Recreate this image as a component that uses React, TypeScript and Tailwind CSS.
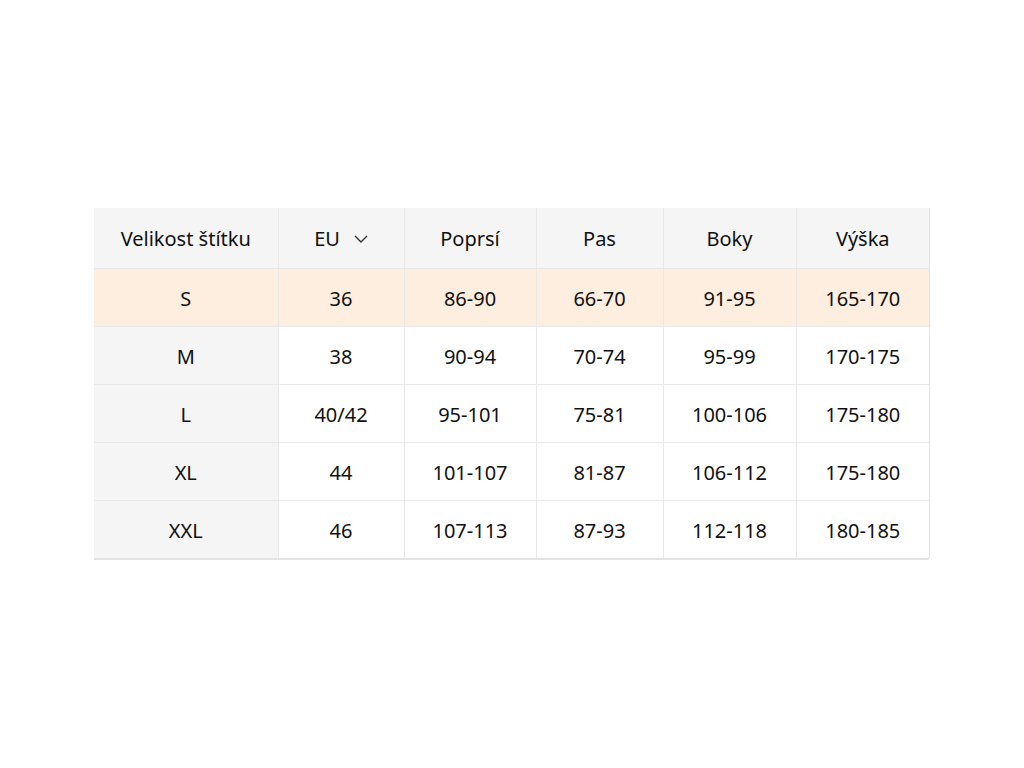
import React from 'react';

const rows = [
  { label: 'S', eu: '36', bust: '86-90', waist: '66-70', hips: '91-95', height: '165-170', active: true },
  { label: 'M', eu: '38', bust: '90-94', waist: '70-74', hips: '95-99', height: '170-175' },
  { label: 'L', eu: '40/42', bust: '95-101', waist: '75-81', hips: '100-106', height: '175-180' },
  { label: 'XL', eu: '44', bust: '101-107', waist: '81-87', hips: '106-112', height: '175-180' },
  { label: 'XXL', eu: '46', bust: '107-113', waist: '87-93', hips: '112-118', height: '180-185' },
];

const widths = ['w-[184px]', 'w-[126px]', 'w-[132px]', 'w-[127px]', 'w-[133px]', 'w-[133px]'];

export default function App() {
  return (
    <div className="min-h-screen bg-white pt-[208px] pl-[94px] font-['Noto_Sans','Open_Sans',sans-serif] text-[20px] text-[#111]">
      <div className="w-[836px] overflow-hidden rounded-br-[4px] border-r border-b-2 border-[#e3e3e3]">
        <table className="w-full table-fixed border-collapse">
          <thead>
            <tr className="h-[60px] bg-[#f5f5f5]">
              <th className={`${widths[0]} pt-[3px] font-normal border-r border-[#e8e8e8]`}>Velikost štítku</th>
              <th className={`${widths[1]} pt-[3px] font-normal border-r border-[#e8e8e8]`}>
                <span className="inline-flex items-center gap-[14px]">
                  EU
                  <svg width="14" height="8" viewBox="0 0 14 8" fill="none" stroke="#333" strokeWidth="1.4">
                    <path d="M1 1l6 6 6-6" />
                  </svg>
                </span>
              </th>
              <th className={`${widths[2]} pt-[3px] font-normal border-r border-[#e8e8e8]`}>Poprsí</th>
              <th className={`${widths[3]} pt-[3px] font-normal border-r border-[#e8e8e8]`}>Pas</th>
              <th className={`${widths[4]} pt-[3px] font-normal border-r border-[#e8e8e8]`}>Boky</th>
              <th className={`${widths[5]} pt-[3px] font-normal`}>Výška</th>
            </tr>
          </thead>
          <tbody>
            {rows.map((r) => (
              <tr key={r.label} className={`h-[58px] border-t border-[#e8e8e8] text-center ${r.active ? 'bg-[#fdeee0]' : 'bg-white'}`}>
                <td className={`pt-[4px] border-r border-[#e8e8e8] ${r.active ? '' : 'bg-[#f5f5f5]'}`}>{r.label}</td>
                <td className="pt-[4px] border-r border-[#e8e8e8]">{r.eu}</td>
                <td className="pt-[4px] border-r border-[#e8e8e8]">{r.bust}</td>
                <td className="pt-[4px] border-r border-[#e8e8e8]">{r.waist}</td>
                <td className="pt-[4px] border-r border-[#e8e8e8]">{r.hips}</td>
                <td className="pt-[4px]">{r.height}</td>
              </tr>
            ))}
          </tbody>
        </table>
      </div>
    </div>
  );
}
